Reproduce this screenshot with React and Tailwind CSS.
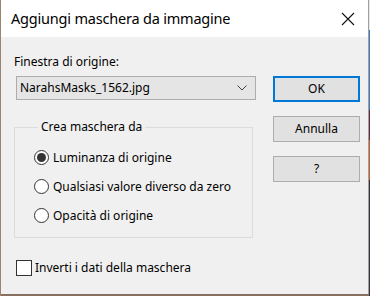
import { useState } from 'react';

const font = { fontFamily: '"Noto Sans", "Open Sans", sans-serif' };

function Radio({ checked, label }) {
  return (
    <div className="flex items-center h-[29px]">
      <span className="w-[15px] h-[15px] rounded-full border border-[#333] bg-white flex items-center justify-center mr-[4px]">
        {checked && <span className="w-[9px] h-[9px] rounded-full bg-[#333]" />}
      </span>
      <span className="text-[12px] text-black">{label}</span>
    </div>
  );
}

function Button({ children, primary }) {
  return (
    <button
      className={`w-[87px] h-[26px] bg-[#e1e1e1] text-[12px] text-black flex items-center justify-center ${
        primary ? 'border-2 border-[#0078d7]' : 'border border-[#adadad]'
      }`}
    >
      {children}
    </button>
  );
}

export default function App() {
  const [mode] = useState('lum');

  return (
    <div className="w-[370px] h-[296px] flex bg-[#8a7060] overflow-hidden" style={font}>
      <div className="w-[1px] bg-[#9b8470]" />
      <div className="w-[368px] h-[294px] flex flex-col bg-[#f0f0f0] border-r border-[#a0a0a0]">
        <div className="h-[37px] bg-white flex items-center justify-between pl-[10px] pr-[12px]">
          <span className="text-[14.5px] text-black tracking-[-0.2px]">Aggiungi maschera da immagine</span>
          <svg width="14" height="14" viewBox="0 0 14 14" className="mr-[1px]">
            <path d="M1 1 L13 13 M13 1 L1 13" stroke="#111" strokeWidth="1.1" fill="none" />
          </svg>
        </div>
        <div className="flex flex-1 pt-[18px]">
          <div className="w-[257px] pl-[13px] flex flex-col">
            <span className="text-[12px] text-black leading-[14px]">Finestra di origine:</span>
            <div className="ml-[2px] mt-[7px] w-[240px] h-[24px] bg-[#e5e5e5] border border-[#adadad] flex items-center justify-between pl-[3px] pr-[8px]">
              <span className="text-[12px] text-black">NarahsMasks_1562.jpg</span>
              <svg width="10" height="6" viewBox="0 0 10 6">
                <path d="M0.5 0.5 L5 5 L9.5 0.5" stroke="#444" strokeWidth="1" fill="none" />
              </svg>
            </div>
            <fieldset className="mt-[20px] w-[239px] h-[118px] border border-[#dcdcdc] pl-[19px] pt-[9px] m-0">
              <legend className="text-[12px] text-black px-[3px] ml-[4px] leading-[14px]">Crea maschera da</legend>
              <Radio checked={mode === 'lum'} label="Luminanza di origine" />
              <Radio checked={mode === 'any'} label="Qualsiasi valore diverso da zero" />
              <Radio checked={mode === 'opa'} label="Opacità di origine" />
            </fieldset>
            <div className="flex items-center mt-[21px] ml-[2px]">
              <span className="w-[16px] h-[16px] border border-[#333] bg-white mr-[3px]" />
              <span className="text-[12px] text-black">Inverti i dati della maschera</span>
            </div>
          </div>
          <div className="flex flex-col pl-[15px] pt-[21px] gap-[14px]">
            <Button primary>OK</Button>
            <Button>Annulla</Button>
            <Button>?</Button>
          </div>
        </div>
      </div>
      <div className="w-[1px] flex flex-col">
        <div className="h-[30px] bg-[#e8e8e8]" />
        <div className="h-[80px] bg-[#3a7bc8]" />
        <div className="h-[30px] bg-[#6b2a3a]" />
        <div className="h-[40px] bg-[#c8602a]" />
        <div className="flex-1 bg-[#3a3040]" />
      </div>
    </div>
  );
}
